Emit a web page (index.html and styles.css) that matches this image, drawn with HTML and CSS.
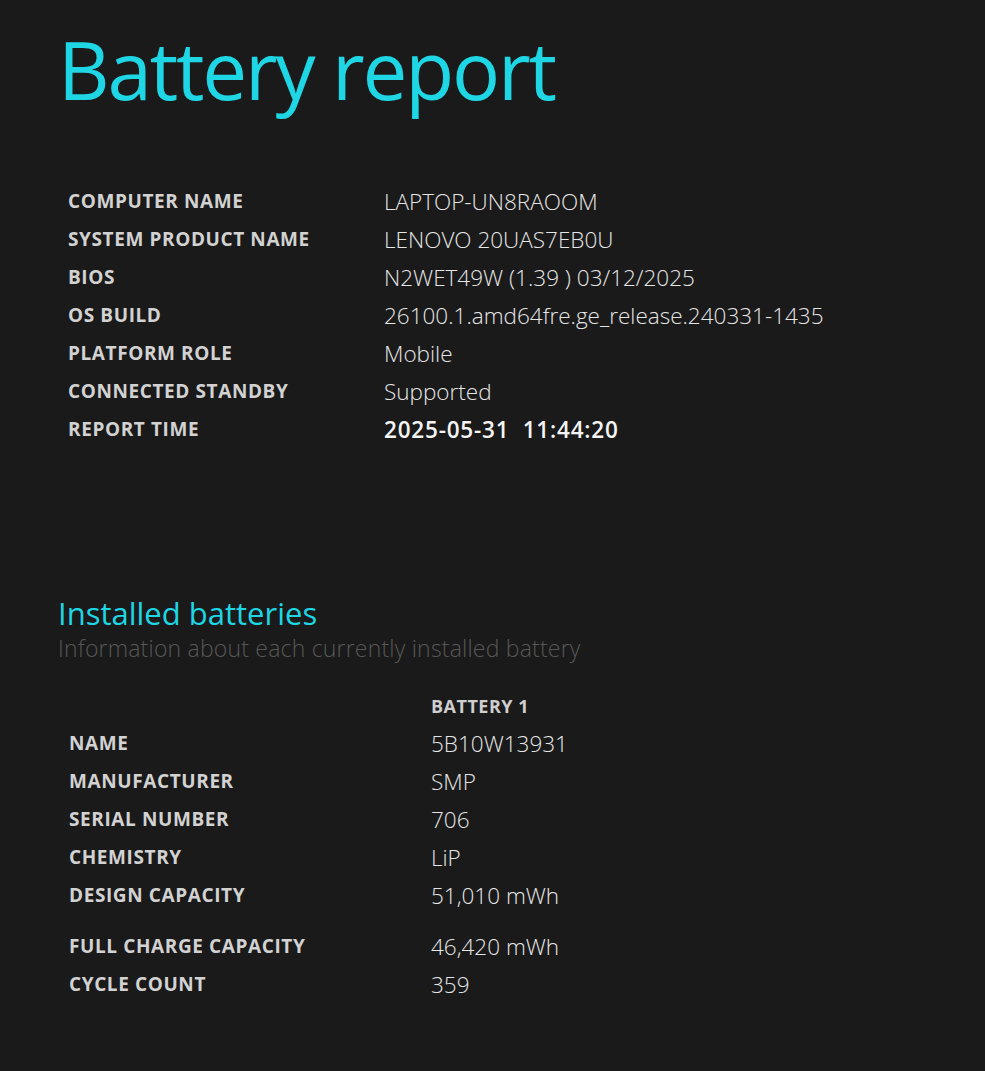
FILE: index.html
```html
<!DOCTYPE html>
<html lang="en">
<head>
<meta charset="utf-8">
<title>Battery report</title>
<link rel="stylesheet" href="styles.css">
</head>
<body>
<main class="page">
  <h1 class="title">Battery report</h1>
  <table class="info">
    <tr><td class="label">COMPUTER NAME</td><td class="value">LAPTOP-UN8RAOOM</td></tr>
    <tr><td class="label">SYSTEM PRODUCT NAME</td><td class="value">LENOVO 20UAS7EB0U</td></tr>
    <tr><td class="label">BIOS</td><td class="value">N2WET49W (1.39 ) 03/12/2025</td></tr>
    <tr><td class="label">OS BUILD</td><td class="value">26100.1.amd64fre.ge_release.240331-1435</td></tr>
    <tr><td class="label">PLATFORM ROLE</td><td class="value">Mobile</td></tr>
    <tr><td class="label">CONNECTED STANDBY</td><td class="value">Supported</td></tr>
    <tr><td class="label">REPORT TIME</td><td class="value strong">2025-05-31&nbsp; 11:44:20</td></tr>
  </table>

  <section class="section">
    <h2 class="section-title">Installed batteries</h2>
    <p class="section-sub">Information about each currently installed battery</p>
    <table class="batteries">
      <tr class="head"><td></td><td class="colhead">BATTERY 1</td></tr>
      <tr><td class="label">NAME</td><td class="value">5B10W13931</td></tr>
      <tr><td class="label">MANUFACTURER</td><td class="value">SMP</td></tr>
      <tr><td class="label">SERIAL NUMBER</td><td class="value">706</td></tr>
      <tr><td class="label">CHEMISTRY</td><td class="value">LiP</td></tr>
      <tr class="gap-after"><td class="label">DESIGN CAPACITY</td><td class="value">51,010 mWh</td></tr>
      <tr><td class="label">FULL CHARGE CAPACITY</td><td class="value">46,420 mWh</td></tr>
      <tr><td class="label">CYCLE COUNT</td><td class="value">359</td></tr>
    </table>
  </section>
</main>
</body>
</html>
```

FILE: styles.css
```css
html, body {
  margin: 0;
  padding: 0;
  background: #1a1a1a;
}
body {
  font-family: "Open Sans", "Noto Sans", sans-serif;
  color: #e2e2e2;
}
.page {
  padding: 19px 0 0 58px;
}
.title {
  margin: 0;
  font-weight: 400;
  font-size: 80px;
  line-height: 100px;
  color: #1ed6e4;
  letter-spacing: -2.2px;
}
.info {
  border-collapse: collapse;
  margin-top: 63px;
}
.info td {
  padding: 0;
  height: 38px;
  vertical-align: middle;
}
.label {
  font-weight: 700;
  font-size: 19px;
  color: #d2d2d2;
  letter-spacing: 0.6px;
  padding-left: 10px !important;
}
.info .label {
  width: 316px;
}
.value {
  font-weight: 300;
  font-size: 22.5px;
  color: #e6e6e6;
}
.value.strong {
  font-weight: 600;
  color: #f4f4f4;
  letter-spacing: 0.8px;
}
.section {
  margin-top: 146px;
}
.section-title {
  margin: 0;
  font-weight: 500;
  font-size: 31px;
  line-height: 38px;
  color: #1ed6e4;
}
.section-sub {
  margin: 0;
  font-weight: 300;
  font-size: 23px;
  line-height: 32px;
  color: #575757;
  letter-spacing: 0.2px;
}
.batteries {
  border-collapse: collapse;
  margin-top: 24px;
}
.batteries td {
  padding: 0;
  height: 38px;
  vertical-align: middle;
}
.batteries .label {
  width: 362px;
  padding-left: 11px !important;
}
.batteries .head td {
  height: 36px;
}
.colhead {
  font-weight: 700;
  font-size: 18px;
  color: #cfcfcf;
  letter-spacing: 0.5px;
}
.gap-after td {
  padding-bottom: 13px !important;
}
```
